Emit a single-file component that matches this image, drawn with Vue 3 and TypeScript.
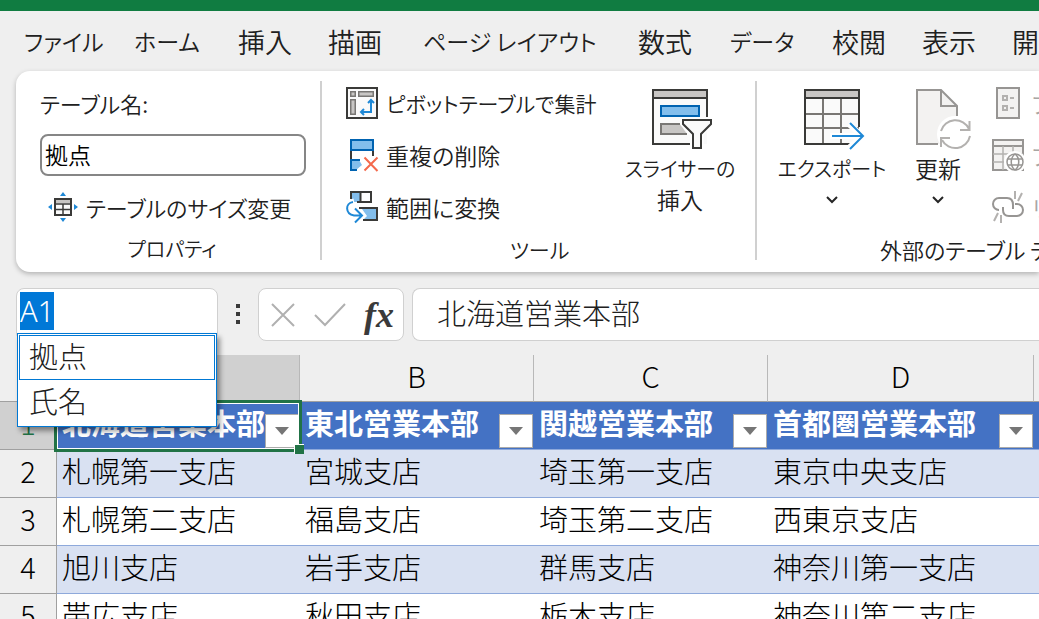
<script setup lang="ts">
import { onMounted, ref } from 'vue'

interface Tab { label: string; kana?: boolean }

const tabs: Tab[] = [
  { label: 'ファイル', kana: true },
  { label: 'ホーム', kana: true },
  { label: '挿入' },
  { label: '描画' },
  { label: 'ページ レイアウト', kana: true },
  { label: '数式' },
  { label: 'データ', kana: true },
  { label: '校閲' },
  { label: '表示' },
  { label: '開発' },
]

const columns: string[] = ['A', 'B', 'C', 'D', 'E']
const headers: string[] = ['北海道営業本部', '東北営業本部', '関越営業本部', '首都圏営業本部']
const rows: string[][] = [
  ['札幌第一支店', '宮城支店', '埼玉第一支店', '東京中央支店'],
  ['札幌第二支店', '福島支店', '埼玉第二支店', '西東京支店'],
  ['旭川支店', '岩手支店', '群馬支店', '神奈川第一支店'],
  ['帯広支店', '秋田支店', '栃木支店', '神奈川第二支店'],
]
const names: string[] = ['拠点', '氏名']

const tableName = ref('拠点')
const cellRef = ref('A1')
const formula = ref('北海道営業本部')
const nameBox = ref<HTMLInputElement | null>(null)

onMounted(() => {
  nameBox.value?.focus()
  nameBox.value?.select()
})
</script>

<template>
  <div class="app">
    <div class="titlebar"></div>
    <nav class="tabs" aria-label="リボン タブ">
      <button v-for="t in tabs" :key="t.label" type="button" class="tab" :class="{ kana: t.kana }">{{ t.label }}</button>
    </nav>

    <section class="ribbon">
      <div class="group props">
        <div class="body rows">
          <label for="table-name" class="mixed">テーブル名:</label>
          <input id="table-name" v-model="tableName" class="table-name" type="text" />
          <button type="button" class="cmd resize mixed">
            <svg width="30" height="30" viewBox="0 0 30 30">
              <path d="M15 0l3 4h-6zM15 30l3-4h-6zM0 15l4-3v6zM30 15l-4-3v6z" fill="#1e88d6" />
              <rect x="7" y="7" width="16" height="16" fill="#fafafa" stroke="#3a3a38" stroke-width="2" />
              <path d="M8 9.500h14" stroke="#c8c6c4" stroke-width="3" />
              <path d="M7 12h16M7 17.500h16M15 12v11" stroke="#3a3a38" stroke-width="1.500" />
            </svg>
            テーブルのサイズ変更
          </button>
        </div>
        <div class="caption small">プロパティ</div>
      </div>

      <div class="group tools">
        <div class="body">
          <div class="rows">
            <button type="button" class="cmd kana">
              <svg width="32" height="32" viewBox="0 0 32 32">
                <rect x="1" y="1" width="30" height="30" fill="#fafafa" stroke="#3a3a38" stroke-width="2" />
                <g fill="#c8c6c4" stroke="#797774" stroke-width="1.500">
                  <rect x="4.750" y="4.750" width="4.500" height="4.500" />
                  <rect x="12.750" y="4.750" width="14.500" height="4.500" />
                  <rect x="4.750" y="12.750" width="4.500" height="14.500" />
                </g>
                <path d="M15 25h10V13M22 16l3-3 3 3M18 22l-3 3 3 3" fill="none" stroke="#1e88d6" stroke-width="2" />
              </svg>
              ピボットテーブルで集計
            </button>
            <button type="button" class="cmd">
              <svg width="32" height="32" viewBox="0 0 32 32">
                <path d="M5 12v8M27 12v5" stroke="#3a3a38" stroke-width="2" />
                <rect x="5" y="1" width="22" height="10" fill="#83beec" stroke="#0063b1" stroke-width="2" />
                <path d="M14 21h-9v10h5l6-5-3-5z" fill="#83beec" />
                <path d="M14 21H5v10h6" fill="none" stroke="#0063b1" stroke-width="2" />
                <path d="M18.500 18.500l13 13.500M18.500 31.500l13-13" stroke="#f4694c" stroke-width="2" />
              </svg>
              重複の削除
            </button>
            <button type="button" class="cmd">
              <svg width="32" height="32" viewBox="0 0 32 32">
                <rect x="5" y="1" width="20" height="10" fill="#fff" />
                <path d="M5 1h9v10H8l-3-3z" fill="#83beec" />
                <path d="M5 8V1h20v10H11M14.500 1v10" fill="none" stroke="#3a3a38" stroke-width="2" />
                <path d="M16 18h15v11H17l4-4z" fill="#83beec" />
                <path d="M13 17h18v12H17" fill="none" stroke="#3a3a38" stroke-width="2" />
                <path d="M8 10C-1 12-1 23 8 24.500h7M9 17.500l7 7-7 7" fill="none" stroke="#fff" stroke-width="5" />
                <path d="M7 11C-1 12-1 23 8 24.500h7M9 17.500l7 7-7 7" fill="none" stroke="#1e88d6" stroke-width="2" />
              </svg>
              範囲に変換
            </button>
          </div>
          <button type="button" class="big">
            <svg width="56" height="60" viewBox="0 0 56 60">
              <path d="M1 1h54v54H1z" fill="#fafafa" />
              <path d="M1 1h54v8H1z" fill="#c8c6c4" />
              <path d="M55 28V1H1v54h37M1 9h54" fill="none" stroke="#3a3a38" stroke-width="2" />
              <rect x="9" y="17" width="38" height="10" fill="#83beec" stroke="#0063b1" stroke-width="2" />
              <path d="M28 35H9v10h26" fill="#c8c6c4" stroke="#797774" stroke-width="2" />
              <path d="M31 31h28v4L49 45v14h-8V45L31 35z" fill="#fff" stroke="#fff" stroke-width="5" />
              <path d="M31 31h28v4L49 45v14h-8V45L31 35z" fill="#fafafa" stroke="#3a3a38" stroke-width="2" />
            </svg>
            <span class="text small">スライサーの</span>
            <span>挿入</span>
          </button>
        </div>
        <div class="caption kana">ツール</div>
      </div>

      <div class="group external">
        <div class="body">
          <button type="button" class="big">
            <svg width="56" height="60" viewBox="0 0 56 60">
              <path d="M1 1h54v54H1z" fill="#fafafa" />
              <path d="M1 1h54v8H1z" fill="#c8c6c4" />
              <path d="M19 9v46M37 9v46M1 25h54M1 39h54" stroke="#797774" stroke-width="2" />
              <path d="M55 38V1H1v54h45M1 9h54" fill="none" stroke="#3a3a38" stroke-width="2" />
              <path d="M26 47h32M45 35l13 12-13 12" fill="none" stroke="#fff" stroke-width="6" />
              <path d="M28 47h31M46 34l13 13-13 13" fill="none" stroke="#1e88d6" stroke-width="2" />
            </svg>
            <span class="text small">エクスポート</span>
            <svg class="chev" width="12" height="8" viewBox="0 0 12 8"><path d="M1 1l5 5 5-5" fill="none" stroke="#262626" stroke-width="2" /></svg>
          </button>
          <button type="button" class="big refresh">
            <svg width="44" height="60" viewBox="0 0 44 60">
              <path d="M1 1h24l16 16v38H1z" fill="#f3f2f1" />
              <path d="M41 27V17L25 1H1v54h21M25 1v16h16" fill="none" stroke="#979593" stroke-width="2" />
              <circle cx="39" cy="45" r="18" fill="#fff" />
              <path d="M25 42a15 15 0 0 1 28-2M54 47a15 15 0 0 1-28 4M53.500 32v9H44M25 58v-9h9" fill="none" stroke="#b3b1af" stroke-width="2" />
            </svg>
            <span class="text">更新</span>
            <svg class="chev" width="12" height="8" viewBox="0 0 12 8"><path d="M1 1l5 5 5-5" fill="none" stroke="#262626" stroke-width="2" /></svg>
          </button>
          <div class="rows muted">
            <button type="button" class="cmd" disabled>
              <svg width="32" height="32" viewBox="0 0 32 32" fill="none" stroke="#979593" stroke-width="2">
                <rect x="5" y="1" width="22" height="30" fill="#f3f2f1" />
                <path d="M11 9h4v4h-4zM11 19h4v4h-4zM18 11h4M18 21h4" stroke="#b3b1af" />
              </svg>
              プロパティ
            </button>
            <button type="button" class="cmd" disabled>
              <svg width="32" height="32" viewBox="0 0 32 32" fill="none" stroke="#979593" stroke-width="2">
                <path d="M1 1h30v30H1z" fill="#f3f2f1" />
                <path d="M1 7h30" />
                <path d="M11 7v24M21 7v8M1 15h30M1 23h14" stroke="#b3b1af" stroke-width="1.500" />
                <circle cx="23" cy="23" r="11" fill="#fff" stroke="none" />
                <circle cx="23" cy="23" r="8" stroke-width="1.500" />
                <path d="M23 15c-5 4-5 12 0 16M23 15c5 4 5 12 0 16M16 20h14M16 26h14" stroke-width="1.500" />
              </svg>
              ブラウザーで開く
            </button>
            <button type="button" class="cmd" disabled>
              <svg width="32" height="32" viewBox="0 0 32 32" fill="none" stroke="#979593" stroke-width="2">
                <path d="M7 19A6 6 0 0 1 7 7h8q6 0 6 7v4" />
                <path d="M23 13h2a6 6 0 0 1 0 12h-8q-6 0-6-6v-3" />
                <path d="M23 0v8M30 2l-4 8M9 24v8M6 22l-4 8" stroke="#b3b1af" />
              </svg>
              リンク解除
            </button>
          </div>
        </div>
        <div class="caption mixed">外部のテーブル データ</div>
      </div>
    </section>

    <section class="formula-bar">
      <div class="name-box">
        <input ref="nameBox" v-model="cellRef" type="text" aria-label="名前ボックス" />
        <ul class="names" role="listbox" aria-label="名前の一覧">
          <li v-for="(n, i) in names" :key="n" role="option" :aria-selected="i === 0" :class="{ active: i === 0 }">{{ n }}</li>
        </ul>
      </div>
      <div class="grip"><i></i><i></i><i></i></div>
      <div class="actions">
        <button type="button" aria-label="キャンセル">
          <svg width="24" height="24" viewBox="0 0 24 24"><path d="M1 1l22 22M23 1L1 23" stroke="#b0b0b0" stroke-width="2" /></svg>
        </button>
        <button type="button" aria-label="入力">
          <svg width="32" height="24" viewBox="0 0 32 24"><path d="M1 12l10 10L31 1" fill="none" stroke="#b0b0b0" stroke-width="2" /></svg>
        </button>
        <button type="button" class="fx">fx</button>
      </div>
      <input v-model="formula" class="formula" type="text" aria-label="数式バー" />
    </section>

    <table class="sheet">
      <colgroup>
        <col class="c-head" /><col class="c-a" /><col class="c-b" /><col class="c-b" /><col class="c-d" /><col />
      </colgroup>
      <thead>
        <tr>
          <th class="corner"></th>
          <th v-for="(c, i) in columns" :key="c" scope="col" :class="{ current: i === 0 }">{{ c }}</th>
        </tr>
      </thead>
      <tbody>
        <tr class="title-row">
          <th scope="row" class="current">1</th>
          <td v-for="(h, i) in headers" :key="h">
            {{ h }}
            <button type="button" class="filter" :aria-label="h + ' フィルター'">
              <svg width="14" height="8" viewBox="0 0 14 8"><path d="M0 0h14L7 8z" fill="#767676" /></svg>
            </button>
            <span v-if="i === 0" class="cursor"></span>
          </td>
          <td></td>
        </tr>
        <tr v-for="(r, ri) in rows" :key="ri" :class="{ band: ri % 2 === 0 }">
          <th scope="row">{{ ri + 2 }}</th>
          <td v-for="v in r" :key="v">{{ v }}</td>
          <td></td>
        </tr>
      </tbody>
    </table>
  </div>
</template>

<style>
body {
  margin: 0;
  background: #efefef;
}
</style>

<style scoped>
.app {
  height: 100vh;
  overflow: hidden;
  background: #efefef;
  color: #202020;
  font-family: "Noto Sans CJK JP", "Noto Sans", sans-serif;
  font-size: 23px;
  font-weight: 350;
}
* {
  box-sizing: border-box;
}
button,
input {
  margin: 0;
  padding: 0;
  border: 0;
  background: none;
  color: inherit;
  font: inherit;
  outline: none;
}
button,
label,
.caption {
  white-space: nowrap;
  font-feature-settings: "palt";
}
svg {
  flex: none;
  overflow: visible;
}
.titlebar {
  height: 11px;
  background: #107c41;
}
.tabs {
  display: grid;
  grid-template-columns: 110px 104px 90px 95px 215px 92px 102px 90px 90px 60px;
  height: 60px;
  padding-left: 24px;
}
.tab {
  font-size: 27px;
  text-align: left;
}
.tab.kana {
  font-size: 23px;
}
.ribbon {
  display: flex;
  height: 201px;
  margin-left: 16px;
  padding-top: 6px;
  background: #fff;
  border-radius: 14px 0 0 14px;
  box-shadow: 0 2px 5px rgba(0, 0, 0, 0.25);
}
.group {
  position: relative;
  flex: none;
}
.props {
  width: 306px;
  padding-left: 24px;
}
.tools {
  width: 435px;
  padding-left: 24px;
}
.external {
  padding-left: 15px;
}
.props::after,
.tools::after {
  content: "";
  position: absolute;
  top: 4px;
  right: 0;
  width: 2px;
  height: 179px;
  background: #d0d0d0;
}
.body {
  display: flex;
  height: 156px;
}
.rows {
  display: grid;
  grid-template-rows: repeat(3, 52px);
  align-items: center;
  justify-items: start;
}
.small {
  font-size: 20px;
}
.kana {
  font-size: 21px;
}
.mixed {
  font-size: 22px;
}
.caption {
  line-height: 32px;
  text-align: center;
}
.props .caption {
  padding-right: 18px;
}
.tools .caption {
  padding-right: 24px;
}
.external .caption {
  padding-left: 108px;
  text-align: left;
}
.table-name {
  width: 266px;
  height: 42px;
  padding: 0 0 3px 3px;
  border: 2px solid #868686;
  border-radius: 8px;
  background: #fff;
  color: #000;
}
.cmd {
  display: flex;
  align-items: center;
  gap: 8px;
  line-height: 32px;
}
.resize {
  padding-left: 8px;
}
.big {
  display: flex;
  flex-direction: column;
  align-items: center;
  width: 120px;
  padding-top: 12px;
  line-height: 31px;
}
.big .text {
  margin-top: 4px;
}
.chev {
  margin-top: 12px;
}
.tools .big {
  margin: 0 17px 0 auto;
}
.refresh {
  width: 92px;
}
.muted {
  margin-left: 8px;
  color: #a8a6a4;
}
.formula-bar {
  display: flex;
  align-items: flex-start;
  margin: 16px 0 0 16px;
  font-weight: 300;
}
.name-box {
  position: relative;
  width: 202px;
  height: 53px;
  padding: 3px;
  border: 1px solid #d0d0d0;
  border-radius: 8px;
  background: #fff;
  font-size: 29px;
}
.name-box input {
  display: block;
  width: 100%;
  height: 38px;
  font-family: "Noto Sans", sans-serif;
  line-height: 38px;
  caret-color: transparent;
}
.name-box input::selection {
  background: #0078d7;
  color: #fff;
}
.names {
  position: absolute;
  z-index: 3;
  top: 44px;
  left: 0;
  width: 200px;
  margin: 0;
  padding: 1px;
  border: 1px solid #0078d4;
  background: #fff;
  box-shadow: 3px 4px 5px rgba(0, 0, 0, 0.4);
  list-style: none;
  color: #202020;
}
.names li {
  height: 45px;
  padding-left: 9px;
  border: 1px solid transparent;
  line-height: 39px;
}
.names li.active {
  border-color: #0078d4;
}
.grip {
  display: grid;
  gap: 4px;
  width: 40px;
  padding-top: 16px;
  justify-content: center;
}
.grip i {
  width: 4px;
  height: 4px;
  background: #3a3a3a;
}
.actions {
  display: flex;
  align-items: center;
  justify-content: space-between;
  width: 146px;
  height: 53px;
  padding: 0 9px 0 12px;
  border: 1px solid #d0d0d0;
  border-radius: 8px;
  background: #fff;
}
.actions button {
  display: flex;
}
.actions .fx {
  font: italic bold 36px/40px "Liberation Serif", serif;
  color: #3a3a3a;
}
.formula {
  flex: 1;
  min-width: 0;
  height: 53px;
  margin-left: 8px;
  padding: 0 0 6px 24px;
  border: 1px solid #d0d0d0;
  border-right: 0;
  border-radius: 8px 0 0 8px;
  background: #fff;
  font-size: 29px;
}
.sheet {
  width: calc(100% + 240px);
  margin-top: 14px;
  border-collapse: separate;
  border-spacing: 0;
  table-layout: fixed;
  color: #000;
  font-size: 29px;
  font-weight: 300;
}
.c-head {
  width: 57px;
}
.c-a {
  width: 243px;
}
.c-b {
  width: 234px;
}
.c-d {
  width: 266px;
}
.sheet th,
.sheet td {
  height: 48px;
  padding: 0;
  line-height: 40px;
  vertical-align: top;
  white-space: nowrap;
}
.sheet th {
  border-right: 1px solid #a0a0a0;
  border-bottom: 1px solid #a0a0a0;
  background: #efefef;
  font-weight: 300;
}
.sheet thead th {
  height: 47px;
  border-right-color: #b8b8b8;
}
.sheet thead .corner {
  border-right-color: transparent;
}
.sheet th.current {
  background: #d0d0d0;
}
.title-row th {
  color: #217346;
}
.sheet td {
  position: relative;
  padding-left: 5px;
  border-bottom: 1px solid #8ea9db;
  background: #fff;
}
.sheet .band td {
  background: #d9e1f2;
}
.sheet .title-row td {
  background: #4472c4;
  color: #fff;
  font-weight: 700;
}
.filter {
  position: absolute;
  right: 1px;
  bottom: 1px;
  display: flex;
  align-items: center;
  justify-content: center;
  width: 34px;
  height: 34px;
  border: 1px solid #ababab;
  background: #fff;
}
.cursor {
  position: absolute;
  z-index: 2;
  top: -2px;
  left: -3px;
  right: -2px;
  bottom: -3px;
  border: 3px solid #217346;
  box-shadow: inset 0 0 0 1px #fff;
}
.cursor::after {
  content: "";
  position: absolute;
  right: -5px;
  bottom: -5px;
  width: 9px;
  height: 9px;
  border-top: 1px solid #fff;
  border-left: 1px solid #fff;
  background: #217346;
}
</style>
